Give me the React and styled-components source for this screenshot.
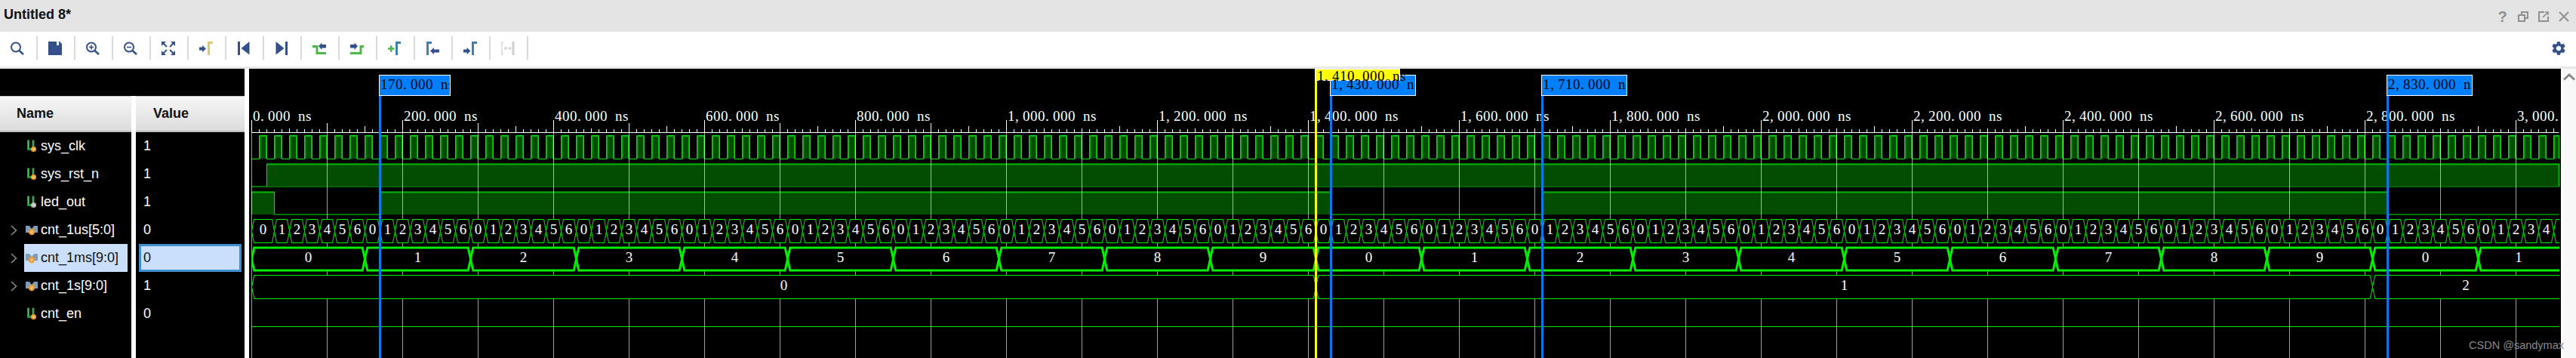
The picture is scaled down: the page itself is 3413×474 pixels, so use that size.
import React from "react";
import styled, { createGlobalStyle } from "styled-components";
import { MdSettings } from "react-icons/md";

const NAVY = "#34508a";
const STEEL = "#3d7fb5";
const LEAF = "#4bb946";
const GOLD = "#e2c866";
const GREEN = "#00e800";
const DIM = "#00b000";
const FILL = "#024d02";
const WAVE_END = 3057;

const GlobalStyle = createGlobalStyle`
  html, body {
    margin: 0;
    padding: 0;
    background: #fff;
    overflow: hidden;
  }
  body {
    font-family: "Liberation Sans", Arial, sans-serif;
  }
`;

const Page = styled.div`
  position: relative;
  width: 3413px;
  height: 474px;
  overflow: hidden;
  display: flex;
  flex-direction: column;
  background: #fff;
`;

const TitleBar = styled.div`
  height: 42px;
  flex: none;
  display: flex;
  align-items: center;
  justify-content: space-between;
  padding: 0 3px 3px 5px;
  box-sizing: border-box;
  background: #e4e4e4;
`;

const Title = styled.span`
  font-size: 18px;
  font-weight: bold;
  color: #111;
`;

const WindowButtons = styled.div`
  display: flex;
  align-items: center;
  margin-top: 5px;
`;

const WindowButton = styled.div`
  width: 27px;
  height: 18px;
  display: flex;
  align-items: center;
  justify-content: center;
  font-size: 20px;
  font-weight: bold;
  color: #8f8f8f;
`;

const Toolbar = styled.div`
  height: 49px;
  flex: none;
  box-sizing: border-box;
  display: flex;
  align-items: center;
  padding-bottom: 3px;
  background: #fff;
  border-bottom: 3px solid #e8e8e8;
`;

const ToolButton = styled.div`
  width: 50px;
  height: 31px;
  box-sizing: border-box;
  display: flex;
  align-items: center;
  padding-left: 14px;
  border-right: 2px solid #d9d9d9;
`;

const Gear = styled.div`
  margin-left: auto;
  margin-right: 12px;
  display: flex;
  color: ${NAVY};
  font-size: 22px;
`;

const Main = styled.div`
  flex: 1;
  min-height: 0;
  display: flex;
  gap: 6px;
`;

const SignalPanel = styled.div`
  width: 324px;
  flex: none;
  display: flex;
  flex-direction: column;
`;

const PanelCap = styled.div`
  height: 36px;
  background: #000;
`;

const Columns = styled.div`
  display: grid;
  grid-template-columns: 174px 144px;
  column-gap: 6px;
`;

const HeadCell = styled.div`
  height: 48px;
  box-sizing: border-box;
  display: flex;
  align-items: center;
  padding-left: ${props => props.$inset}px;
  font-size: 18px;
  font-weight: bold;
  color: #111;
  background: linear-gradient(#f6f6f6, #dcdcdc);
  border-top: 1px solid #c8c8c8;
  border-bottom: 2px solid #bdbdbd;
`;

const NameCell = styled.div`
  height: 37px;
  display: flex;
  background: #000;
`;

const Expander = styled.div`
  width: 32px;
  flex: none;
  display: flex;
  align-items: center;
  padding-left: 14px;
  box-sizing: border-box;
`;

const NameLabel = styled.div`
  width: 137px;
  display: flex;
  align-items: center;
  gap: 4px;
  padding-left: 2px;
  box-sizing: border-box;
  font-size: 18px;
  white-space: nowrap;
  color: ${props => (props.$selected ? "#111" : "#fff")};
  background: ${props => (props.$selected ? "#cadffc" : "transparent")};
`;

const ValueCell = styled.div`
  height: 37px;
  padding: 0 4px;
  display: flex;
  background: #000;
`;

const ValueLabel = styled.div`
  width: 136px;
  box-sizing: border-box;
  display: flex;
  align-items: center;
  padding-left: ${props => (props.$selected ? "3px" : "6px")};
  font-size: 18px;
  color: ${props => (props.$selected ? "#111" : "#fff")};
  background: ${props => (props.$selected ? "#cadffc" : "transparent")};
  border: ${props => (props.$selected ? "3px solid #3f8fd0" : "none")};
`;

const ColumnFill = styled.div`
  height: 40px;
  background: #000;
`;

const Wave = styled.svg`
  display: block;
  flex: none;
  background: #000;
`;

const WaveText = styled.text`
  font-family: "Liberation Serif", "Times New Roman", serif;
  font-size: 19px;
  fill: ${props => props.$ink || "#fff"};
`;

const ScrollTrack = styled.div`
  flex: 1;
  margin-left: -4px;
  display: flex;
  justify-content: center;
  padding-top: 6px;
  background: #f8f8f8;
`;

const Watermark = styled.div`
  position: absolute;
  right: 16px;
  bottom: 9px;
  font-size: 14.5px;
  color: #8a8a8a;
`;

const X = ns => 333.5 + ns;

function Glyph({ children }) {
  return (
    <svg width="18" height="18" viewBox="0 0 18 18" fill="none">
      {children}
    </svg>
  );
}

const Lens = ({ sign }) => (
  <Glyph>
    <circle cx="7" cy="7.5" r="6" stroke={NAVY} strokeWidth="2" />
    <path d="M11.5 12 L17 17" stroke={NAVY} strokeWidth="2.6" />
    {sign && <path d="M4 7.5 H10" stroke={NAVY} strokeWidth="1.6" />}
    {sign === "+" && <path d="M7 4.5 V10.5" stroke={NAVY} strokeWidth="1.6" />}
  </Glyph>
);

const Flag = ({ x, color }) => (
  <path d={`M${x + 1.5} 18 V1.5 H${x + 7}`} stroke={color} strokeWidth="3" />
);

const toolIcons = [
  <Lens />,
  <Glyph>
    <path d="M0 0 H11 V5 H14 V0 H15 L18 3 V18 H0 Z" fill={NAVY} />
  </Glyph>,
  <Lens sign="+" />,
  <Lens sign="-" />,
  <Glyph>
    <path d="M0 0 H6 L0 6 Z M18 0 H12 L18 6 Z M0 18 H6 L0 12 Z M18 18 H12 L18 12 Z" fill={NAVY} />
    <path d="M2 2 L7 7 M16 2 L11 7 M2 16 L7 11 M16 16 L11 11" stroke={NAVY} strokeWidth="2" />
  </Glyph>,
  <Glyph>
    <path d="M0 7.5 H4 V5 L9 9.5 L4 14 V11.5 H0 Z" fill={NAVY} />
    <Flag x={11} color={GOLD} />
  </Glyph>,
  <Glyph>
    <path d="M1 0 H4 V18 H1 Z" fill={NAVY} />
    <path d="M16.5 0 V17.5 L5.5 9 Z" fill={NAVY} />
  </Glyph>,
  <Glyph>
    <path d="M14 0 H17 V18 H14 Z" fill={NAVY} />
    <path d="M1.5 0 V17.5 L12.5 9 Z" fill={NAVY} />
  </Glyph>,
  <Glyph>
    <path d="M0 6.5 H6 V15.5 H18" stroke={LEAF} strokeWidth="3" />
    <path d="M8 6 L12.5 1.5 V4 H18 V8.5 H12.5 V11 Z" fill={NAVY} />
  </Glyph>,
  <Glyph>
    <path d="M0 15.5 H14 V6.5 H18" stroke={LEAF} strokeWidth="3" />
    <path d="M0 4 H5.5 V1.5 L10 6 L5.5 11 V8.5 H0 Z" fill={NAVY} />
  </Glyph>,
  <Glyph>
    <path d="M0 9.5 H8.5 M4.2 5.2 V13.8" stroke={LEAF} strokeWidth="2.6" />
    <Flag x={10} color={STEEL} />
  </Glyph>,
  <Glyph>
    <Flag x={1} color={STEEL} />
    <path d="M6 12.5 L11 8 V10.5 H18 V14.5 H11 V17 Z" fill={NAVY} />
  </Glyph>,
  <Glyph>
    <path d="M0 10.5 H4.5 V8 L9.5 12.5 L4.5 17 V14.5 H0 Z" fill={NAVY} />
    <Flag x={11} color={STEEL} />
  </Glyph>,
  <Glyph>
    <path d="M1 1 V17 M0 1 H3 M0 17 H3" stroke="#cfcfcf" strokeWidth="1.2" />
    <path d="M16 0 V18" stroke="#cfcfcf" strokeWidth="3" />
    <path d="M4.5 9 H13 M6.5 7 L4.5 9 L6.5 11 M11 7 L13 9 L11 11" stroke="#cfcfcf" strokeWidth="1.2" />
  </Glyph>
];

const ScalarIcon = ({ dot }) => (
  <svg width="16" height="18" viewBox="0 0 16 18" style={{ flex: "none" }}>
    <path d="M3.5 0.5 V14 M5 12.5 H8 M10 0.5 V10" stroke="#2f8a3a" strokeWidth="3" fill="none" />
    <path d="M3.5 1 V12 M10 1 V9" stroke="#7fa88a" strokeWidth="1" fill="none" />
    <circle cx="10.5" cy="12.5" r="3.6" fill={dot} />
    <path d="M9.3 11.3 L10.5 14 L11.7 11.3" stroke="#fff" strokeWidth="0.8" fill="none" />
  </svg>
);

const BusIcon = () => (
  <svg width="16" height="18" viewBox="0 0 16 18" style={{ flex: "none" }}>
    <path d="M0 3 H5 L8 7 L11 3 H16 V12 H0 Z" fill="#7f9db8" />
    <circle cx="8" cy="11" r="4.2" fill="#ef9a2d" />
    <path d="M6.7 9.6 L8 12.6 L9.3 9.6" stroke="#fff" strokeWidth="0.8" fill="none" />
  </svg>
);

const Chevron = () => (
  <svg width="9" height="14" viewBox="0 0 9 14" fill="none">
    <path d="M1 1 L7.5 7 L1 13" stroke="#8a8a8a" strokeWidth="1.6" />
  </svg>
);

const signals = [
  { name: "sys_clk", value: "1", icon: <ScalarIcon dot="#ef9a2d" /> },
  { name: "sys_rst_n", value: "1", icon: <ScalarIcon dot="#ef9a2d" /> },
  { name: "led_out", value: "1", icon: <ScalarIcon dot="#b5b5b5" /> },
  { name: "cnt_1us[5:0]", value: "0", icon: <BusIcon />, bus: true },
  { name: "cnt_1ms[9:0]", value: "0", icon: <BusIcon />, bus: true, selected: true },
  { name: "cnt_1s[9:0]", value: "1", icon: <BusIcon />, bus: true },
  { name: "cnt_en", value: "0", icon: <ScalarIcon dot="#ef9a2d" /> }
];

// per-character x list, the ruler font is a fixed 10px grid
const charGrid = (label, x) => label.split("").map((_, i) => x + i * 10).join(" ");

const formatNs = ns =>
  `${ns.toLocaleString("en-US", { minimumFractionDigits: 3, maximumFractionDigits: 3 })} ns`;

function range(from, to, step) {
  const out = [];
  for (let v = from; v <= to; v += step) out.push(v);
  return out;
}

function tickTop(ns) {
  if (ns % 200 === 0) return 159;
  if (ns % 100 === 0) return ns < 1000 ? 163 : 170;
  if (ns % 200 === 150) return 167;
  if (ns % 50 === 0) return 170;
  return 171;
}

function Ruler() {
  return (
    <g>
      <path d={`M${X(0)} 175.5 H${X(WAVE_END)}`} stroke="#fff" />
      {range(0, WAVE_END, 10).map(ns => (
        <path key={ns} d={`M${X(ns)} ${tickTop(ns)} V175`} stroke="#fff" />
      ))}
      {range(0, 3000, 200).map(ns => {
        const label = formatNs(ns);
        return (
          <WaveText key={ns} x={charGrid(label, Math.floor(X(ns)) + 2)} y="160">
            {label}
          </WaveText>
        );
      })}
    </g>
  );
}

function Clock() {
  const highs = range(10, WAVE_END, 20);
  const line = highs
    .map(ns => `H${X(ns)} V179.5 H${X(Math.min(ns + 10, WAVE_END))} V210.5`)
    .join(" ");
  return (
    <g>
      {highs.map(ns => (
        <rect key={ns} x={X(ns)} y="180" width="10" height="30" fill={FILL} />
      ))}
      {highs.map(ns => (
        <path
          key={ns}
          d={`M${X(ns) + 1} 210 V180.5 H${X(ns) + 9} V210`}
          stroke={DIM}
          fill="none"
        />
      ))}
      <path d={`M${X(0)} 210.5 ${line}`} stroke={GREEN} fill="none" />
    </g>
  );
}

// scalar trace: spans are [from, to] of the high level
function Level({ top, bottom, spans, bright }) {
  let d = `M${X(0)} ${bottom}`;
  spans.forEach(([from, to]) => {
    d += ` H${X(from)} V${top} H${X(to)} V${bottom}`;
  });
  d += ` H${X(WAVE_END)}`;
  return (
    <g>
      {spans.map(([from, to]) => (
        <rect key={from} x={X(from)} y={top} width={to - from} height={bottom - top} fill={FILL} />
      ))}
      {spans.map(([from, to]) => (
        <path key={from} d={`M${X(from)} ${top + 1} H${X(to)}`} stroke={DIM} />
      ))}
      <path d={d} stroke={bright} fill="none" />
    </g>
  );
}

function Bus({ top, bottom, cells, chamfer, width, textY }) {
  const mid = (top + bottom) / 2;
  return (
    <g>
      {cells.map(([from, to]) => {
        const a = X(from);
        const b = X(to);
        return (
          <path
            key={from}
            d={`M${a} ${mid} L${a + chamfer} ${top} H${b - chamfer} L${b} ${mid} L${b - chamfer} ${bottom} H${a + chamfer} Z`}
            fill="#000"
            stroke="#00f000"
            strokeWidth={width}
          />
        );
      })}
      {cells.map(([from, to, label]) => {
        const end = Math.min(to, WAVE_END);
        const center = X((from + end) / 2);
        if ((from + end) / 2 >= WAVE_END - 10) return null;
        return (
          <WaveText key={from} x={center} y={textY} textAnchor="middle">
            {label}
          </WaveText>
        );
      })}
    </g>
  );
}

const usCells = [
  [0, 30, 0],
  ...range(0, 151, 1).map(k => [30 + 20 * k, 50 + 20 * k, ((k % 7) + 1) % 7])
];
const msCells = [
  [0, 150, 0],
  ...range(0, 21, 1).map(k => [150 + 140 * k, 290 + 140 * k, (k + 1) % 10])
];
const sCells = [
  [0, 1410, 0],
  [1410, 2810, 1],
  [2810, 3200, 2]
];

const markers = [
  { ns: 170, width: 94 },
  { ns: 1430, width: 113 },
  { ns: 1710, width: 113 },
  { ns: 2830, width: 113 }
];

function Markers() {
  return (
    <g>
      <path d={`M${X(1410)} 106 V474`} stroke="#ffff00" strokeWidth="3" />
      {markers.map(({ ns, width }) => (
        <g key={ns}>
          <path d={`M${X(ns)} 127 V474`} stroke="#0a78e8" strokeWidth="3" />
          <rect x={X(ns) - 1} y="99.5" width={width} height="27" fill="#0080ff" stroke="#fff" />
          <clipPath id={`flag-${ns}`}>
            <rect x={X(ns)} y="99" width={width - 2} height="28" />
          </clipPath>
        </g>
      ))}
      <rect x={X(1410) - 1} y="91.5" width="112" height="15" fill="#ffff00" stroke="#fff" />
      {markers.map(({ ns }) => {
        const label = formatNs(ns);
        return (
          <g key={ns} clipPath={`url(#flag-${ns})`}>
            <WaveText $ink="#000" x={charGrid(label, Math.floor(X(ns)) + 1)} y="117.5">
              {label}
            </WaveText>
          </g>
        );
      })}
      <WaveText $ink="#000" x={charGrid(formatNs(1410), Math.floor(X(1410)) + 2)} y="107">
        {formatNs(1410)}
      </WaveText>
    </g>
  );
}

function Waveform() {
  return (
    <Wave width="3063" height="383" viewBox="330 91 3063 383">
      <clipPath id="plot">
        <rect x="333" y="91" width="3058" height="383" />
      </clipPath>
      <g clipPath="url(#plot)">
        <Clock />
        <Level top={217} bottom={247} spans={[[20, WAVE_END]]} bright="#00e800" />
        <path d={`M${X(0)} 247.5 H${X(WAVE_END)}`} stroke="#007a00" />
        <Level
          top={254}
          bottom={284}
          spans={[
            [0, 30],
            [170, 1430],
            [1710, 2830]
          ]}
          bright="#00e800"
        />
        <path d={`M${X(0)} 432.5 H${X(WAVE_END)}`} stroke="#00e800" />
        {range(0, WAVE_END, 100).map(ns => (
          <path key={ns} d={`M${X(ns)} 175 V474`} stroke="rgba(255,255,255,0.62)" />
        ))}
        <Bus top={290.5} bottom={321.5} cells={usCells} chamfer={3} width={1} textY={310} />
        <Bus top={328} bottom={358} cells={msCells} chamfer={3.3} width={3} textY={347} />
        <Bus top={364.5} bottom={395.5} cells={sCells} chamfer={3.3} width={1} textY={384} />
        <Ruler />
      </g>
      <Markers />
    </Wave>
  );
}

export default function App() {
  return (
    <Page>
      <GlobalStyle />
      <TitleBar>
        <Title>Untitled 8*</Title>
        <WindowButtons>
          <WindowButton>?</WindowButton>
          <WindowButton>
            <svg width="14" height="14" viewBox="0 0 14 14" fill="none" stroke="#8f8f8f" strokeWidth="2">
              <rect x="1" y="5" width="8" height="8" />
              <path d="M5 4 V1 H13 V9 H10" />
            </svg>
          </WindowButton>
          <WindowButton>
            <svg width="14" height="14" viewBox="0 0 14 14" fill="none" stroke="#8f8f8f" strokeWidth="2">
              <path d="M8 1 H1 V13 H13 V7" />
              <path d="M6 8 L13 1 M9 1 H13 V5" strokeWidth="1.6" />
            </svg>
          </WindowButton>
          <WindowButton>
            <svg width="14" height="14" viewBox="0 0 14 14" fill="none" stroke="#8f8f8f" strokeWidth="2">
              <path d="M1 1 L13 13 M13 1 L1 13" />
            </svg>
          </WindowButton>
        </WindowButtons>
      </TitleBar>
      <Toolbar>
        {toolIcons.map((icon, i) => (
          <ToolButton key={i}>{icon}</ToolButton>
        ))}
        <Gear>
          <MdSettings />
        </Gear>
      </Toolbar>
      <Main>
        <SignalPanel>
          <PanelCap />
          <Columns>
            <HeadCell $inset={22}>Name</HeadCell>
            <HeadCell $inset={23}>Value</HeadCell>
            {signals.map(s => (
              <React.Fragment key={s.name}>
                <NameCell>
                  <Expander>{s.bus && <Chevron />}</Expander>
                  <NameLabel $selected={s.selected}>
                    {s.icon}
                    {s.name}
                  </NameLabel>
                </NameCell>
                <ValueCell>
                  <ValueLabel $selected={s.selected}>{s.value}</ValueLabel>
                </ValueCell>
              </React.Fragment>
            ))}
            <ColumnFill />
            <ColumnFill />
          </Columns>
        </SignalPanel>
        <Waveform />
        <ScrollTrack>
          <svg width="16" height="10" viewBox="0 0 16 10" fill="none">
            <path d="M1 8.5 L8 2 L15 8.5" stroke="#888" strokeWidth="3" />
          </svg>
        </ScrollTrack>
      </Main>
      <Watermark>CSDN @sandymax</Watermark>
    </Page>
  );
}
